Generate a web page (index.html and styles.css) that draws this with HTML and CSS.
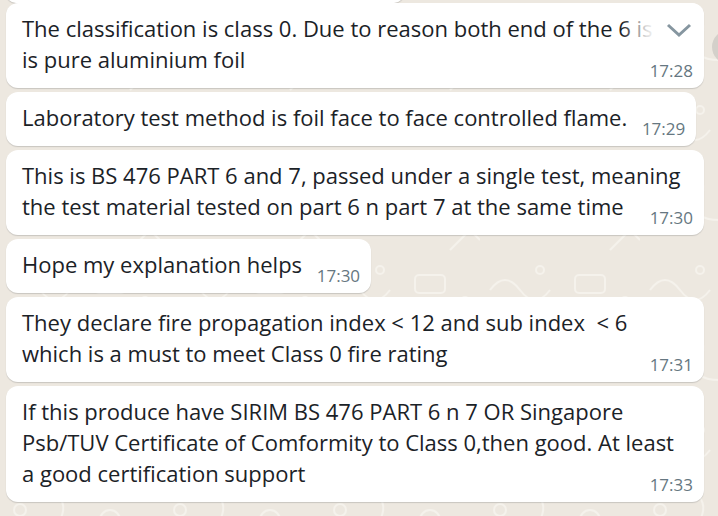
FILE: index.html
```html
<!DOCTYPE html>
<html>
<head>
  <meta charset="UTF-8">
  <title>Chat</title>
  <link rel="stylesheet" href="styles.css">
</head>
<body>
<div class="chat">
  <div class="bubble cut"></div>

  <div class="bubble full hover">
    <span class="text">The classification is class 0. Due to reason both end of the 6 is<br>is pure aluminium foil</span><span class="spacer"></span>
    <span class="time">17:28</span>
    <span class="menu">
      <svg width="26" height="16" viewBox="0 0 26 16"><path d="M2 3 L13 13 L24 3" fill="none" stroke="#8696a0" stroke-width="3"/></svg>
    </span>
  </div>

  <div class="bubble">
    <span class="text">Laboratory test method is foil face to face controlled flame.</span><span class="spacer"></span>
    <span class="time">17:29</span>
  </div>

  <div class="bubble full">
    <span class="text">This is BS 476 PART 6 and 7, passed under a single test, meaning<br>the test material tested on part 6 n part 7 at the same time</span><span class="spacer"></span>
    <span class="time">17:30</span>
  </div>

  <div class="bubble">
    <span class="text">Hope my explanation helps</span><span class="spacer"></span>
    <span class="time">17:30</span>
  </div>

  <div class="bubble full">
    <span class="text">They declare fire propagation index &lt; 12 and sub index &nbsp;&lt; 6<br>which is a must to meet Class 0 fire rating</span><span class="spacer"></span>
    <span class="time">17:31</span>
  </div>

  <div class="bubble full">
    <span class="text">If this produce have SIRIM BS 476 PART 6 n 7 OR Singapore<br>Psb/TUV Certificate of Comformity to Class 0,then good. At least<br>a good certification support</span><span class="spacer"></span>
    <span class="time">17:33</span>
  </div>
</div>
<div class="side-btn"></div>
</body>
</html>
```

FILE: styles.css
```css
body {
  margin: 0;
  width: 718px;
  height: 516px;
  overflow: hidden;
  font-family: "Open Sans", "Noto Sans", sans-serif;
  background-color: #ede8e0;
  background-image: url("data:image/svg+xml;utf8,<svg xmlns='http://www.w3.org/2000/svg' width='160' height='160'><g fill='none' stroke='%23f5f2ec' stroke-width='2'><circle cx='20' cy='30' r='6'/><path d='M50 10 q20 10 10 30 t20 20'/><circle cx='110' cy='40' r='10'/><path d='M130 90 l20 -20 l10 10'/><circle cx='60' cy='110' r='4'/><path d='M10 130 q15 -20 30 0 t30 0'/><rect x='95' y='115' width='30' height='18' rx='4'/><circle cx='145' cy='140' r='3'/></g></svg>");
  position: relative;
}

.chat {
  display: flex;
  flex-direction: column;
  align-items: flex-start;
  gap: 4px;
  padding-left: 6px;
}

.bubble {
  position: relative;
  max-width: 698px;
  box-sizing: border-box;
  padding: 10px 11px 13px 16px;
  background: #fff;
  border-radius: 12px;
  box-shadow: 0 1px 1px rgba(11, 20, 26, 0.16);
  font-size: 22px;
  line-height: 31px;
  color: #1b2227;
  white-space: nowrap;
}

.bubble.full {
  width: 698px;
}

.bubble.cut {
  width: 398px;
  height: 20px;
  margin-top: -17px;
  padding: 0;
  margin-bottom: -4px;
}

.spacer {
  display: inline-block;
  width: 58px;
}

.time {
  position: absolute;
  right: 11px;
  bottom: 9px;
  font-size: 17px;
  line-height: 1;
  color: #667781;
}

.hover {
  overflow: hidden;
}

.menu {
  position: absolute;
  top: 0;
  right: 0;
  width: 82px;
  height: 54px;
  display: flex;
  align-items: center;
  justify-content: flex-end;
  padding-right: 12px;
  box-sizing: border-box;
  background: linear-gradient(to right, rgba(255, 255, 255, 0), rgba(255, 255, 255, 0.85) 30%, #fff 45%);
  border-top-right-radius: 12px;
}

.side-btn {
  position: absolute;
  left: 712px;
  top: 30px;
  width: 34px;
  height: 34px;
  border-radius: 50%;
  background: #d4d0ca;
}
```
